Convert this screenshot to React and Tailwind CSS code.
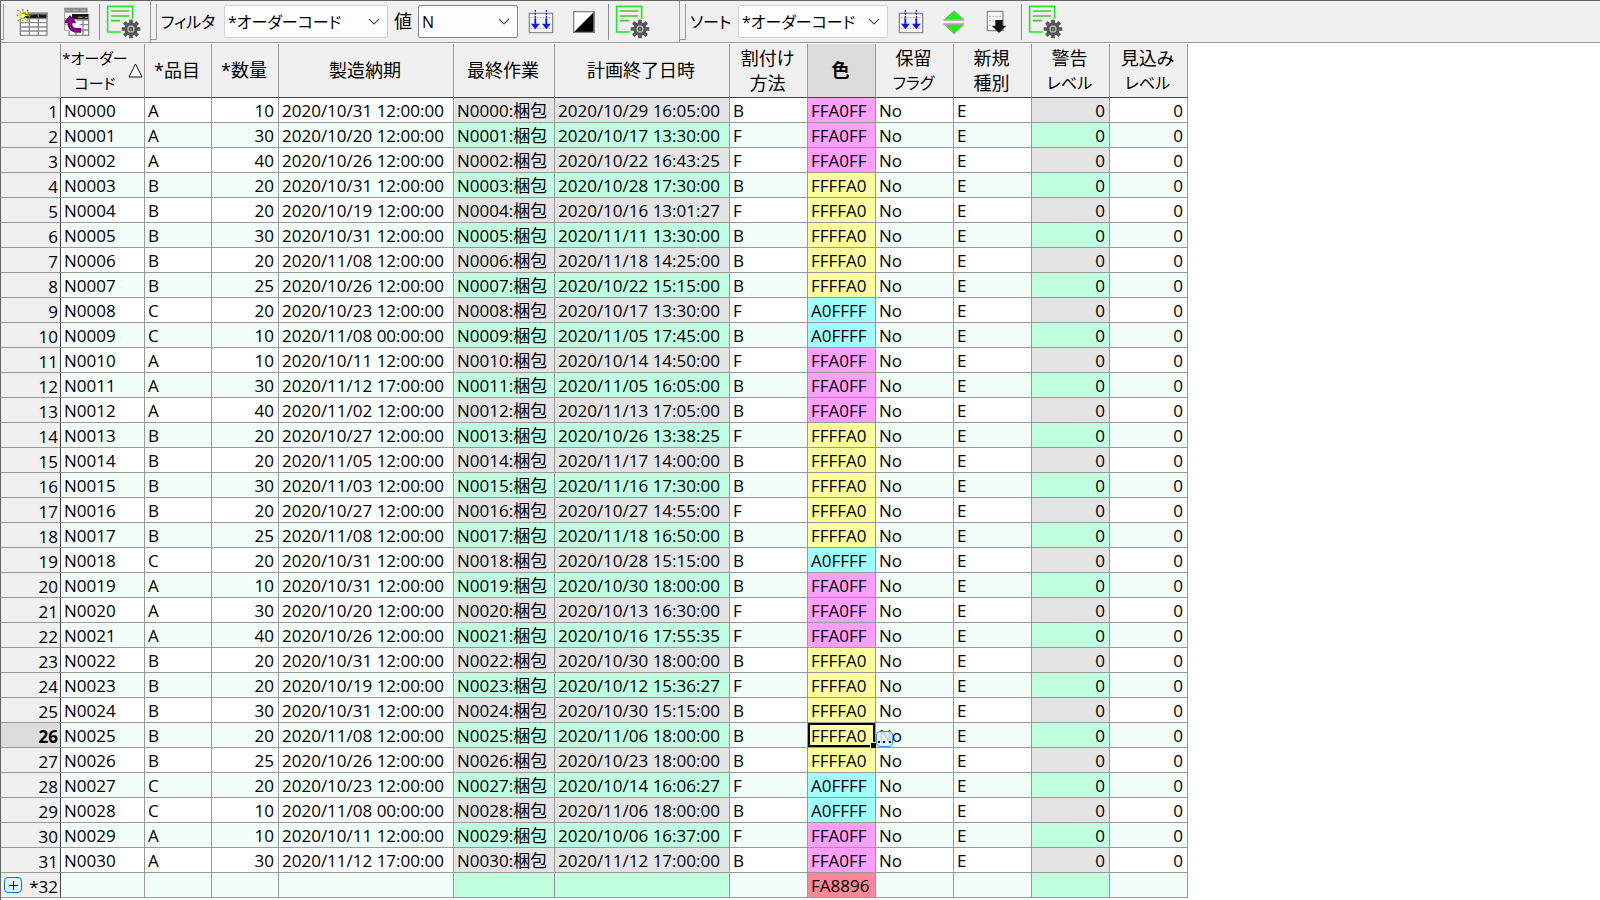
import React, { useState } from 'react';
import clsx from 'clsx';

const orders = [
  ['A', 10, '2020/10/31 12:00:00', '2020/10/29 16:05:00', 'B', 'FFA0FF'],
  ['A', 30, '2020/10/20 12:00:00', '2020/10/17 13:30:00', 'F', 'FFA0FF'],
  ['A', 40, '2020/10/26 12:00:00', '2020/10/22 16:43:25', 'F', 'FFA0FF'],
  ['B', 20, '2020/10/31 12:00:00', '2020/10/28 17:30:00', 'B', 'FFFFA0'],
  ['B', 20, '2020/10/19 12:00:00', '2020/10/16 13:01:27', 'F', 'FFFFA0'],
  ['B', 30, '2020/10/31 12:00:00', '2020/11/11 13:30:00', 'B', 'FFFFA0'],
  ['B', 20, '2020/11/08 12:00:00', '2020/11/18 14:25:00', 'B', 'FFFFA0'],
  ['B', 25, '2020/10/26 12:00:00', '2020/10/22 15:15:00', 'B', 'FFFFA0'],
  ['C', 20, '2020/10/23 12:00:00', '2020/10/17 13:30:00', 'F', 'A0FFFF'],
  ['C', 10, '2020/11/08 00:00:00', '2020/11/05 17:45:00', 'B', 'A0FFFF'],
  ['A', 10, '2020/10/11 12:00:00', '2020/10/14 14:50:00', 'F', 'FFA0FF'],
  ['A', 30, '2020/11/12 17:00:00', '2020/11/05 16:05:00', 'B', 'FFA0FF'],
  ['A', 40, '2020/11/02 12:00:00', '2020/11/13 17:05:00', 'B', 'FFA0FF'],
  ['B', 20, '2020/10/27 12:00:00', '2020/10/26 13:38:25', 'F', 'FFFFA0'],
  ['B', 20, '2020/11/05 12:00:00', '2020/11/17 14:00:00', 'B', 'FFFFA0'],
  ['B', 30, '2020/11/03 12:00:00', '2020/11/16 17:30:00', 'B', 'FFFFA0'],
  ['B', 20, '2020/10/27 12:00:00', '2020/10/27 14:55:00', 'F', 'FFFFA0'],
  ['B', 25, '2020/11/08 12:00:00', '2020/11/18 16:50:00', 'B', 'FFFFA0'],
  ['C', 20, '2020/10/31 12:00:00', '2020/10/28 15:15:00', 'B', 'A0FFFF'],
  ['A', 10, '2020/10/31 12:00:00', '2020/10/30 18:00:00', 'B', 'FFA0FF'],
  ['A', 30, '2020/10/20 12:00:00', '2020/10/13 16:30:00', 'F', 'FFA0FF'],
  ['A', 40, '2020/10/26 12:00:00', '2020/10/16 17:55:35', 'F', 'FFA0FF'],
  ['B', 20, '2020/10/31 12:00:00', '2020/10/30 18:00:00', 'B', 'FFFFA0'],
  ['B', 20, '2020/10/19 12:00:00', '2020/10/12 15:36:27', 'F', 'FFFFA0'],
  ['B', 30, '2020/10/31 12:00:00', '2020/10/30 15:15:00', 'B', 'FFFFA0'],
  ['B', 20, '2020/11/08 12:00:00', '2020/11/06 18:00:00', 'B', 'FFFFA0'],
  ['B', 25, '2020/10/26 12:00:00', '2020/10/23 18:00:00', 'B', 'FFFFA0'],
  ['C', 20, '2020/10/23 12:00:00', '2020/10/14 16:06:27', 'F', 'A0FFFF'],
  ['C', 10, '2020/11/08 00:00:00', '2020/11/06 18:00:00', 'B', 'A0FFFF'],
  ['A', 10, '2020/10/11 12:00:00', '2020/10/06 16:37:00', 'F', 'FFA0FF'],
  ['A', 30, '2020/11/12 17:00:00', '2020/11/12 17:00:00', 'B', 'FFA0FF'],
].map(([item, qty, due, end, method, color], i) => {
  const code = `N${String(i).padStart(4, '0')}`;
  return { code, item, qty, due, last: `${code}:梱包`, end, method, color, hold: 'No', kind: 'E', warn: 0, forecast: 0 };
});

const rows = [...orders, { color: 'FA8896' }];

const columns = [
  { key: 'code', width: 'w-[84px]', title: ['*オーダー', 'コード'], sorted: true },
  { key: 'item', width: 'w-[67px]', title: ['*品目'] },
  { key: 'qty', width: 'w-[67px]', title: ['*数量'], right: true },
  { key: 'due', width: 'w-[175px]', title: ['製造納期'] },
  { key: 'last', width: 'w-[101px]', title: ['最終作業'], locked: true },
  { key: 'end', width: 'w-[175px]', title: ['計画終了日時'], locked: true },
  { key: 'method', width: 'w-[78px]', title: ['割付け', '方法'] },
  { key: 'color', width: 'w-[68px]', title: ['色'] },
  { key: 'hold', width: 'w-[78px]', title: ['保留', 'フラグ'] },
  { key: 'kind', width: 'w-[78px]', title: ['新規', '種別'] },
  { key: 'warn', width: 'w-[78px]', title: ['警告', 'レベル'], right: true, locked: true },
  { key: 'forecast', width: 'w-[78px]', title: ['見込み', 'レベル'], right: true },
];

const colorClass = {
  FFA0FF: 'bg-[#ffa0ff]',
  FFFFA0: 'bg-[#ffffa0]',
  A0FFFF: 'bg-[#a0ffff]',
  FA8896: 'bg-[#fa8896]',
};

const isKana = (text) => /^[*ァ-ー]+$/.test(text);

const NewTableIcon = () => (
  <svg width="32" height="30" viewBox="48 18 96 90">
    <path d="M60 52H142V104H60Z" fill="#fff" />
    <path d="M66 34H142V40H66Z" fill="#888" />
    <path d="M72 40H142V51H72Z" fill="#1c1c1c" />
    <path d="M88 43V49M115 43V49" stroke="#999" strokeWidth="3" />
    <path d="M60 53H142M60 65H142M60 78H142M60 90H142M60 103H142M61 53V103M88 53V103M115 53V103M141 34V103" stroke="#8a8a8a" strokeWidth="4" fill="none" />
    <path d="M52 27L84 60M84 27L54 60M68 24V64M50 43H92" stroke="#8c8c76" strokeWidth="5" strokeDasharray="5 3" />
    <path d="M56 32L80 55M82 34L56 55M68 30V58M58 43H86" stroke="#f4ef12" strokeWidth="4" strokeDasharray="6 3" />
    <path d="M64 40H74V48H64Z" fill="#fffde0" />
  </svg>
);

const RestoreTableIcon = () => (
  <svg width="26" height="30" viewBox="188 17 78 90">
    <path d="M190 32H258V86H190Z" fill="#fff" />
    <path d="M189 19H259V34H189Z" fill="#8b8b8b" />
    <path d="M194 27H208M214 27H232M238 27H254" stroke="#aaa" strokeWidth="4" />
    <path d="M190 34V87H202M190 52H200M190 70H200" stroke="#999" strokeWidth="3" fill="none" />
    <path d="M210 38H263V104H204V92H210Z" fill="#fff" />
    <path d="M212 38H263V54H212Z" fill="#171717" />
    <path d="M230 48H244M250 48H259" stroke="#999" strokeWidth="4" />
    <path d="M225 56H263M235 70H263M240 86H263M203 102H263M262 38V104M245 55V104M224 92V104M203 90V104" stroke="#8a8a8a" strokeWidth="4" fill="none" />
    <path d="M206 41L190 60V66H199C198 80 207 91 221 94H240V80H224C216 79 212 75 213 66H223V60Z" fill="#800080" />
  </svg>
);

const SheetGearIcon = () => (
  <svg width="36" height="34" viewBox="319 13 108 102">
    <path d="M364 94H324V17H399V54" fill="none" stroke="#27e52d" strokeWidth="5" />
    <path d="M334 31H388M334 46H388M334 60H361" stroke="#42c834" strokeWidth="5" />
    <path d="M394 57V113M366 85H422M374 65L414 105M414 65L374 105" stroke="#555" strokeWidth="11" />
    <circle cx="394" cy="85" r="20" fill="#555" />
    <circle cx="394" cy="85" r="9" fill="none" stroke="#b8b8b8" strokeWidth="4" />
    <circle cx="394" cy="85" r="3" fill="#8b8b8b" />
  </svg>
);

const AutoFilterIcon = () => (
  <svg width="26" height="26" viewBox="25 22 78 78">
    <path d="M29 35H99V93H29Z" fill="#f4f4f4" stroke="#8c8c8c" strokeWidth="4" />
    <path d="M33 48H96M33 80H96" stroke="#aaa" strokeWidth="3" strokeDasharray="5 4" />
    <path d="M47 25V64M80 25V64" stroke="#1010ff" strokeWidth="4" strokeDasharray="5 4" />
    <path d="M47 50V70M80 50V70" stroke="#1010ff" strokeWidth="5" />
    <path d="M34 66H60L47 83ZM67 66H93L80 83Z" fill="#1010ff" />
  </svg>
);

const InvertIcon = () => (
  <svg width="22" height="22" viewBox="161 29 66 66">
    <path d="M163 31H225V93H163Z" fill="#fff" />
    <path d="M223 33V92H164Z" fill="#000" />
    <path d="M163 31H225V93H163Z" fill="none" stroke="#858585" strokeWidth="4" />
  </svg>
);

const SortOrderIcon = () => (
  <svg width="22" height="26" viewBox="187 22 66 78">
    <path d="M220 27L192 53H248ZM220 97L192 69H248Z" fill="#12f512" stroke="#a5a5a5" strokeWidth="3" />
    <path d="M189 55H251M189 67H251" stroke="#a5a5a5" strokeWidth="4" />
  </svg>
);

const SheetDownIcon = () => (
  <svg width="22" height="24" viewBox="322 28 66 72">
    <path d="M326 32H373V90H326Z" fill="#f7f7f7" stroke="#8c8c8c" strokeWidth="4" />
    <path d="M331 47H367M331 60H345M331 74H340" stroke="#aaa" strokeWidth="3" strokeDasharray="6 4" />
    <path d="M350 58H372V75H383L361 97L339 75H350Z" fill="#111" />
  </svg>
);

const ToolButton = ({ label, children }) => (
  <button type="button" aria-label={label} title={label} className="flex items-center justify-center shrink-0">
    {children}
  </button>
);

const Divider = () => <div className="w-px h-9 bg-[#8c8c8c] shrink-0" />;

const Grip = ({ width = 'w-1.5' }) => (
  <div className={clsx('h-9 border-r border-b border-[#999] shrink-0', width)} />
);

const Combo = ({ id, value, onChange, options, width, strong }) => (
  <div className={clsx('relative shrink-0', width)}>
    <select
      id={id}
      value={value}
      onChange={(e) => onChange(e.target.value)}
      className={clsx(
        'appearance-none w-full h-[33px] pl-[3px] pr-6 rounded-xs border bg-[#fdfdfd]',
        strong ? 'border-[#858585]' : 'border-[#d2d2d2]'
      )}
    >
      {options.map((o) => <option key={o}>{o}</option>)}
    </select>
    <svg className="absolute right-2 top-[13px] pointer-events-none" width="12" height="8" viewBox="0 0 12 8">
      <path d="M1 1L6 6L11 1" fill="none" stroke="#555" strokeWidth="1.2" />
    </svg>
  </div>
);

const Toolbar = () => {
  const [filterField, setFilterField] = useState('*オーダーコード');
  const [filterValue, setFilterValue] = useState('N');
  const [sortField, setSortField] = useState('*オーダーコード');
  const fields = ['*オーダーコード', '*品目', '*数量'];

  return (
    <div className="flex h-[42px] border-b border-[#999] bg-[#f0f0f0] text-[16px]">
      <div className="flex items-center w-[150px] border-r border-[#999]">
        <Grip width="w-[3px]" />
        <div className="flex items-center gap-4 pl-3 pr-[9px]">
          <ToolButton label="新規テーブル"><NewTableIcon /></ToolButton>
          <ToolButton label="テーブルを戻す"><RestoreTableIcon /></ToolButton>
        </div>
        <Divider />
        <div className="pl-1.5">
          <ToolButton label="表示設定"><SheetGearIcon /></ToolButton>
        </div>
      </div>

      <div className="flex items-center w-[529px] border-r border-[#999]">
        <Grip />
        <label htmlFor="filter-field" className="w-[67px] pl-1">フィルタ</label>
        <Combo id="filter-field" value={filterField} onChange={setFilterField} options={fields} width="w-[164px]" />
        <label htmlFor="filter-value" className="w-[30px] pl-[6px] text-[18px]">値</label>
        <Combo id="filter-value" value={filterValue} onChange={setFilterValue} options={['N']} width="w-[100px]" strong />
        <div className="flex items-center gap-[19px] pl-[10px] pr-[13px]">
          <ToolButton label="フィルタ適用"><AutoFilterIcon /></ToolButton>
          <ToolButton label="反転"><InvertIcon /></ToolButton>
        </div>
        <Divider />
        <div className="pl-1.5">
          <ToolButton label="フィルタ設定"><SheetGearIcon /></ToolButton>
        </div>
      </div>

      <div className="flex items-center">
        <Grip />
        <label htmlFor="sort-field" className="w-[52px] pl-1">ソート</label>
        <Combo id="sort-field" value={sortField} onChange={setSortField} options={fields} width="w-[150px]" />
        <div className="flex items-center gap-[19px] pl-[10px] pr-[13px]">
          <ToolButton label="ソート適用"><AutoFilterIcon /></ToolButton>
          <ToolButton label="昇順・降順"><SortOrderIcon /></ToolButton>
          <div className="pl-0.5">
            <ToolButton label="シートに反映"><SheetDownIcon /></ToolButton>
          </div>
        </div>
        <Divider />
        <div className="pl-1.5">
          <ToolButton label="ソート設定"><SheetGearIcon /></ToolButton>
        </div>
      </div>
    </div>
  );
};

const HeaderCell = ({ col, active }) => (
  <th
    scope="col"
    className={clsx(
      'p-0 border-r border-b border-r-[#999] border-b-[#444] align-middle text-[18px] leading-[25px]',
      active ? 'bg-[#dcdcdc] font-bold' : 'bg-[#f0f0f0] font-normal'
    )}
  >
    <div className={clsx('flex items-center justify-center', !col.sorted && 'pr-0.5')}>
      <div>
        {col.title.map((line) => (
          <div
            key={line}
            className={clsx('whitespace-nowrap', isKana(line) && (col.sorted ? 'text-[15px]' : 'text-[16px]'))}
          >
            {line}
          </div>
        ))}
      </div>
      {col.sorted && (
        <svg width="15" height="15" viewBox="0 0 15 15" className="shrink-0">
          <path d="M7.5 1L14 14H1Z" fill="#fff" stroke="#111" strokeWidth="1" />
        </svg>
      )}
    </div>
  </th>
);

const OrderTable = () => {
  const [selected, setSelected] = useState({ row: 25, key: 'color' });

  const cellBg = (row, col, i) => {
    if (col.key === 'color') return colorClass[row.color];
    if (col.locked) return i % 2 ? 'bg-[#c0ffe0]' : 'bg-[#e4e4e4]';
    return i % 2 ? 'bg-[#f2fff9]' : 'bg-white';
  };

  return (
    <table className="table-fixed w-[1187px] border-separate border-spacing-0 text-[17px]">
      <colgroup>
        <col className="w-[60px]" />
        {columns.map((c) => <col key={c.key} className={c.width} />)}
      </colgroup>
      <thead>
        <tr className="h-[54px]">
          <td className="bg-[#f0f0f0] border-r border-b border-r-[#999] border-b-[#999]" />
          {columns.map((c) => <HeaderCell key={c.key} col={c} active={c.key === selected.key} />)}
        </tr>
      </thead>
      <tbody>
        {rows.map((row, i) => (
          <tr key={i} className="h-[25px]">
            <th
              scope="row"
              className={clsx(
                'p-0 border-r border-b border-r-[#444] border-b-[#999]',
                i === selected.row ? 'bg-[#dcdcdc] font-bold' : 'bg-[#f0f0f0] font-normal'
              )}
            >
              <div className="flex items-center h-6 pt-1 pl-[3px] pr-[2px] leading-5">
                {!row.code && (
                  <button
                    type="button"
                    aria-label="行を追加"
                    className="flex items-center justify-center w-[18px] h-4 mb-1 rounded border border-[#0a78d0] bg-[#e2f0fb]"
                  >
                    <svg width="10" height="10" viewBox="0 0 10 10">
                      <path d="M1 5.5H10M5.5 1V10" stroke="#222" strokeWidth="1" />
                    </svg>
                  </button>
                )}
                <span className="ml-auto">{row.code ? i + 1 : `*${i + 1}`}</span>
              </div>
            </th>
            {columns.map((c) => {
              const active = i === selected.row && c.key === selected.key;
              return (
                <td
                  key={c.key}
                  onClick={() => setSelected({ row: i, key: c.key })}
                  className={clsx(
                    'relative pl-[3px] pr-1 pt-0.5 pb-0 h-[25px] leading-[22px] border-r border-b border-[#999] whitespace-nowrap',
                    c.right && 'text-right',
                    cellBg(row, c, i)
                  )}
                >
                  {row[c.key]}
                  {active && (
                    <>
                      <div className="absolute inset-0 border-2 border-black pointer-events-none" />
                      <div className="absolute z-10 -right-px -bottom-px w-[6px] h-[6px] border-t border-l border-white bg-black" />
                      <button
                        type="button"
                        aria-label="色を選択"
                        className="absolute z-10 left-full bottom-0 ml-px flex items-end justify-center w-[17px] h-4 pb-[3px] rounded border border-[#2f8fd8] bg-[#e2f0fb]/85"
                      >
                        <svg width="15" height="2" viewBox="0 0 15 2">
                          <path d="M1 0H3V2H1ZM6 0H8V2H6ZM12 0H14V2H12Z" fill="#111" />
                        </svg>
                      </button>
                    </>
                  )}
                </td>
              );
            })}
          </tr>
        ))}
      </tbody>
    </table>
  );
};

export default function App() {
  return (
    <div
      lang="ja"
      className="min-h-screen bg-white text-black border-t border-l border-[#666] font-['Open_Sans','Noto_Sans_CJK_JP',sans-serif] [font-feature-settings:'palt']"
    >
      <Toolbar />
      <div className="overflow-x-auto pt-px">
        <OrderTable />
      </div>
    </div>
  );
}
